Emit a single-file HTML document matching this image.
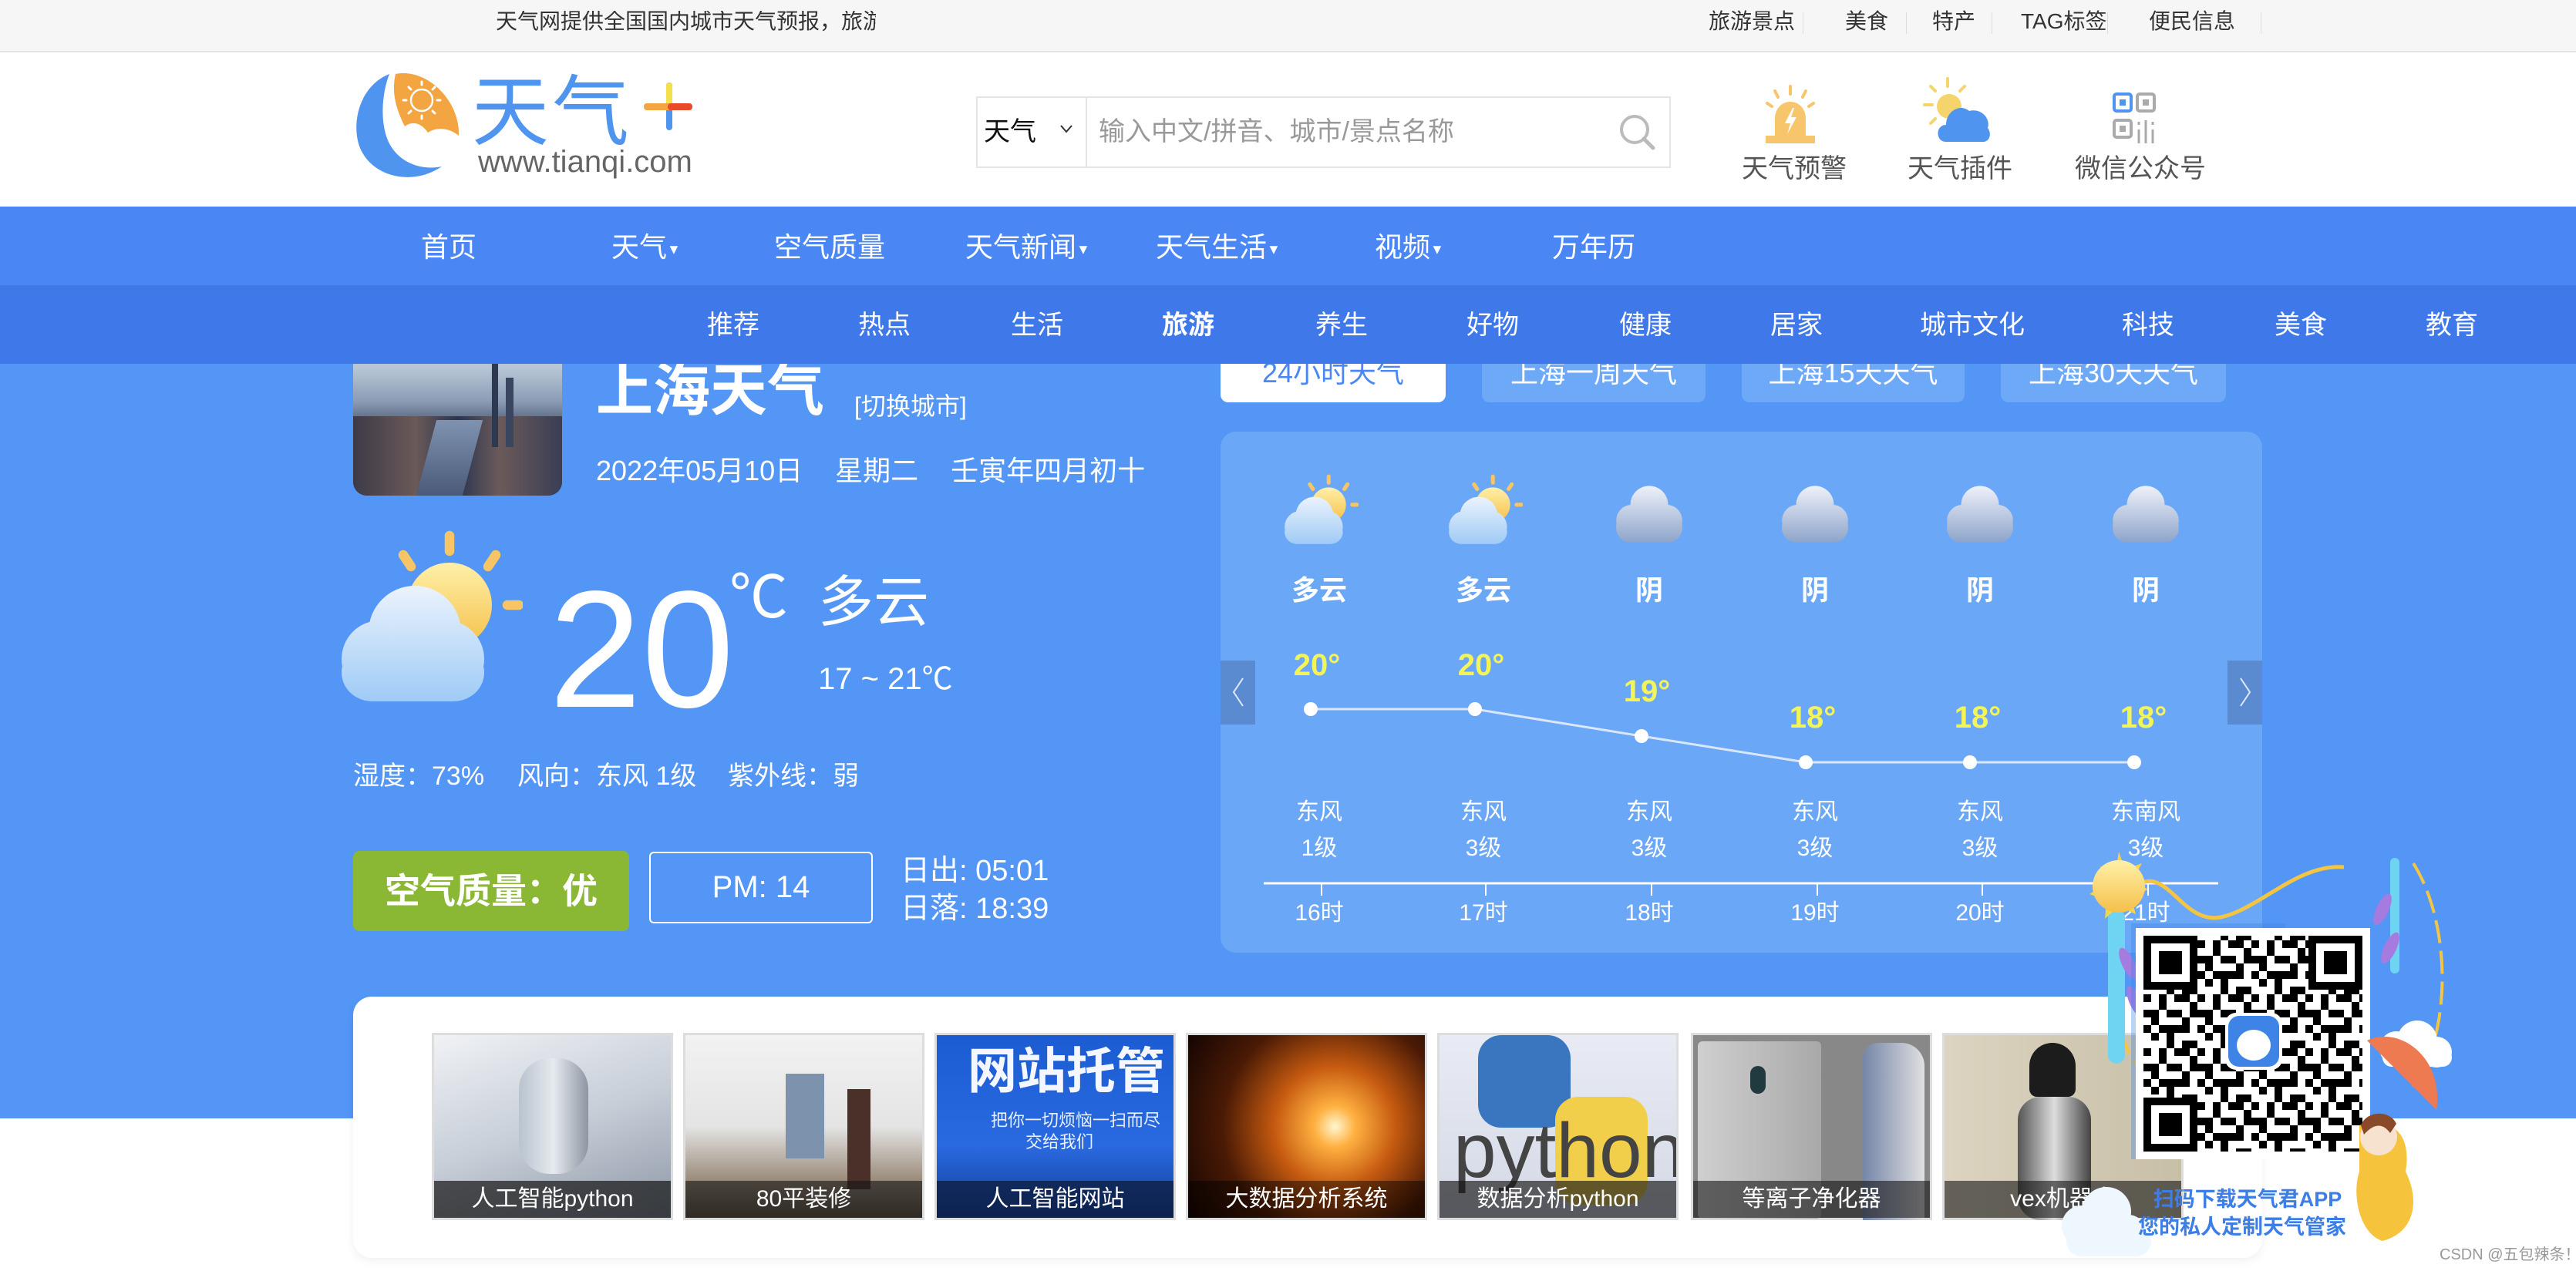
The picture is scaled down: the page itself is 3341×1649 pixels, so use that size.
<!DOCTYPE html>
<html><head><meta charset="utf-8">
<style>
*{margin:0;padding:0;box-sizing:border-box}
html,body{width:3341px;height:1649px;overflow:hidden;background:#fff}
body{font-family:"Liberation Sans","Noto Sans CJK SC",sans-serif;position:relative}
.a{position:absolute;white-space:nowrap;line-height:1}
.cn{font-family:"Liberation Sans","Noto Sans CJK SC",sans-serif}
</style></head><body>

<div class="a" style="left:0;top:400px;width:3341px;height:1051px;background:#5396f6"></div>

<div class="a" style="left:458px;top:420px;width:271px;height:223px;border-radius:18px;overflow:hidden;background:linear-gradient(180deg,#6f8fb8 0%,#b9c8d8 25%,#8b9db4 45%,#35435e 65%,#1f2a40 100%)">
 <div class="a" style="left:0;top:120px;width:271px;height:103px;background:linear-gradient(90deg,#3d3a48,#6a5a58 30%,#2a3550 50%,#6b5a5a 70%,#3a3e55)"></div>
 <div class="a" style="left:95px;top:125px;width:60px;height:98px;background:linear-gradient(180deg,#7f93b0,#4a5a78);transform:skewX(-15deg)"></div>
 <div class="a" style="left:180px;top:50px;width:8px;height:110px;background:#2e3850"></div>
 <div class="a" style="left:198px;top:70px;width:10px;height:90px;background:#3a4560"></div>
</div>

<div class="a" style="left:0;top:0;width:3341px;height:68px;background:#f6f6f6;border-bottom:2px solid #e3e3e3"></div>
<div class="a" style="left:643px;top:14px;font-size:28px;color:#333;width:493px;overflow:hidden">天气网提供全国国内城市天气预报，旅游景点</div>
<div class="a" style="left:2216px;top:14px;font-size:28px;color:#333">旅游景点</div>
<div class="a" style="left:2393px;top:14px;font-size:28px;color:#333">美食</div>
<div class="a" style="left:2506px;top:14px;font-size:28px;color:#333">特产</div>
<div class="a" style="left:2621px;top:14px;font-size:28px;color:#333">TAG标签</div>
<div class="a" style="left:2787px;top:14px;font-size:28px;color:#333">便民信息</div>
<div class="a" style="left:2338px;top:16px;width:1px;height:28px;background:#ddd"></div>
<div class="a" style="left:2472px;top:16px;width:1px;height:28px;background:#ddd"></div>
<div class="a" style="left:2583px;top:16px;width:1px;height:28px;background:#ddd"></div>
<div class="a" style="left:2733px;top:16px;width:1px;height:28px;background:#ddd"></div>
<div class="a" style="left:2932px;top:16px;width:1px;height:28px;background:#ddd"></div>

<div class="a" style="left:0;top:70px;width:3341px;height:198px;background:#fff"></div>
<svg class="a" style="left:455px;top:92px" width="150" height="146" viewBox="0 0 150 146">
 <path d="M50 4 C10 20 0 70 12 100 C28 138 80 150 118 124 C90 130 60 118 48 90 C38 66 40 30 50 4Z" fill="#4f94ef"/>
 <path d="M58 4 C100 -4 142 40 140 84 C128 74 112 72 100 80 C92 68 80 64 70 72 C60 52 52 30 58 4Z" fill="#f2a541"/>
 <circle cx="92" cy="38" r="14" fill="none" stroke="#fff" stroke-width="2.5"/>
 <g stroke="#fff" stroke-width="3" stroke-linecap="round">
  <line x1="92" y1="14" x2="92" y2="18"/><line x1="92" y1="58" x2="92" y2="62"/>
  <line x1="68" y1="38" x2="72" y2="38"/><line x1="112" y1="38" x2="116" y2="38"/>
  <line x1="75" y1="21" x2="78" y2="24"/><line x1="106" y1="52" x2="109" y2="55"/>
  <line x1="109" y1="21" x2="106" y2="24"/><line x1="78" y1="52" x2="75" y2="55"/>
 </g>
</svg>
<div class="a" style="left:612px;top:96px;font-size:100px;color:#4f94ef;letter-spacing:4px">天气</div>
<div class="a" style="left:864px;top:107px;width:8px;height:62px;background:#4f94ef;border-radius:4px"></div>
<div class="a" style="left:864px;top:107px;width:8px;height:30px;background:#f4e04a;border-radius:4px"></div>
<div class="a" style="left:835px;top:134px;width:60px;height:9px;background:#f2a541;border-radius:4px"></div>
<div class="a" style="left:866px;top:134px;width:32px;height:9px;background:#e84a2a;border-radius:4px"></div>
<div class="a" style="left:620px;top:190px;font-size:40px;color:#666">www.tianqi.com</div>

<div class="a" style="left:1266px;top:125px;width:901px;height:93px;border:2px solid #e5e5e5;background:#fff"></div>
<div class="a" style="left:1408px;top:127px;width:2px;height:89px;background:#e5e5e5"></div>
<div class="a" style="left:1276px;top:154px;font-size:34px;color:#111">天气</div>
<svg class="a" style="left:1374px;top:160px" width="18" height="14"><path d="M2 3 L9 11 L16 3" fill="none" stroke="#333" stroke-width="2"/></svg>
<div class="a" style="left:1425px;top:154px;font-size:34px;color:#999">输入中文/拼音、城市/景点名称</div>
<svg class="a" style="left:2098px;top:146px" width="52" height="52"><circle cx="22" cy="22" r="17" fill="none" stroke="#bbb" stroke-width="4"/><line x1="34" y1="34" x2="46" y2="46" stroke="#bbb" stroke-width="5" stroke-linecap="round"/></svg>

<svg class="a" style="left:2288px;top:110px" width="68" height="78" viewBox="0 0 68 78">
 <g stroke="#f6c56c" stroke-width="4" stroke-linecap="round"><line x1="34" y1="2" x2="34" y2="12"/><line x1="14" y1="8" x2="18" y2="16"/><line x1="54" y1="8" x2="50" y2="16"/><line x1="4" y1="24" x2="10" y2="28"/><line x1="64" y1="24" x2="58" y2="28"/></g>
 <path d="M14 68 L14 44 C14 30 24 22 34 22 C44 22 54 30 54 44 L54 68Z" fill="#f6c56c"/>
 <rect x="2" y="66" width="64" height="10" fill="#f6c56c"/>
 <path d="M37 30 L27 50 L34 50 L30 64 L42 42 L35 42 L39 30Z" fill="#fff"/>
</svg>
<svg class="a" style="left:2494px;top:100px" width="90" height="86" viewBox="0 0 90 86">
 <g stroke="#f6d46c" stroke-width="4" stroke-linecap="round"><line x1="32" y1="2" x2="32" y2="12"/><line x1="10" y1="12" x2="16" y2="18"/><line x1="54" y1="12" x2="48" y2="18"/><line x1="2" y1="36" x2="12" y2="36"/><line x1="10" y1="60" x2="16" y2="54"/></g>
 <circle cx="34" cy="38" r="16" fill="#f6d46c"/>
 <path d="M30 84 C16 84 16 62 30 62 C30 44 48 34 60 44 C76 40 88 54 84 66 C90 74 86 84 78 84Z" fill="#4f94ef"/>
</svg>
<svg class="a" style="left:2740px;top:120px" width="60" height="68" viewBox="0 0 60 68">
 <rect x="2" y="2" width="22" height="22" rx="3" fill="none" stroke="#4f94ef" stroke-width="4"/><rect x="9" y="9" width="8" height="8" fill="#4f94ef"/>
 <rect x="32" y="2" width="22" height="22" rx="3" fill="none" stroke="#aaa" stroke-width="4"/><rect x="39" y="9" width="8" height="8" fill="#aaa"/>
 <rect x="2" y="36" width="22" height="22" rx="3" fill="none" stroke="#aaa" stroke-width="4"/><rect x="9" y="43" width="8" height="8" fill="#aaa"/>
 <g stroke="#aaa" stroke-width="3"><line x1="34" y1="38" x2="34" y2="42"/><line x1="34" y1="48" x2="34" y2="66"/><line x1="43" y1="36" x2="43" y2="66"/><line x1="52" y1="38" x2="52" y2="42"/><line x1="52" y1="48" x2="52" y2="66"/></g>
</svg>
<div class="a" style="left:2259px;top:202px;font-size:34px;color:#555">天气预警</div>
<div class="a" style="left:2474px;top:202px;font-size:34px;color:#555">天气插件</div>
<div class="a" style="left:2691px;top:202px;font-size:34px;color:#555">微信公众号</div>

<div class="a" style="left:1583px;top:430px;width:292px;height:92px;background:#fff;border-radius:10px"></div>
<div class="a" style="left:1922px;top:430px;width:290px;height:92px;background:#6ea9f8;border-radius:10px"></div>
<div class="a" style="left:2259px;top:430px;width:289px;height:92px;background:#6ea9f8;border-radius:10px"></div>
<div class="a" style="left:2595px;top:430px;width:292px;height:92px;background:#6ea9f8;border-radius:10px"></div>
<div class="a" style="left:1583px;top:466px;width:292px;text-align:center;font-size:36px;color:#4a87f5">24小时天气</div>
<div class="a" style="left:1922px;top:466px;width:290px;text-align:center;font-size:36px;color:#fff">上海一周天气</div>
<div class="a" style="left:2259px;top:466px;width:289px;text-align:center;font-size:36px;color:#fff">上海15天天气</div>
<div class="a" style="left:2595px;top:466px;width:292px;text-align:center;font-size:36px;color:#fff">上海30天天气</div>
<div class="a" style="left:773px;top:470px;font-size:74px;font-weight:bold;color:#fff">上海天气</div>

<div class="a" style="left:0;top:268px;width:3341px;height:102px;background:#4a87f5"></div>
<div class="a" style="left:0;top:370px;width:3341px;height:102px;background:#3f78e9"></div>
<div class="a" style="top:303px;left:0;width:3341px;height:40px;font-size:36px;color:#fff">
 <span class="a" style="left:546px">首页</span>
 <span class="a" style="left:793px">天气<small style="font-size:18px;vertical-align:middle">▼</small></span>
 <span class="a" style="left:1004px">空气质量</span>
 <span class="a" style="left:1252px">天气新闻<small style="font-size:18px;vertical-align:middle">▼</small></span>
 <span class="a" style="left:1499px">天气生活<small style="font-size:18px;vertical-align:middle">▼</small></span>
 <span class="a" style="left:1783px">视频<small style="font-size:18px;vertical-align:middle">▼</small></span>
 <span class="a" style="left:2013px">万年历</span>
</div>
<div class="a" style="top:405px;left:0;width:3341px;height:40px;font-size:34px;color:#fff">
 <span class="a" style="left:917px">推荐</span>
 <span class="a" style="left:1113px">热点</span>
 <span class="a" style="left:1311px">生活</span>
 <span class="a" style="left:1507px;font-weight:bold">旅游</span>
 <span class="a" style="left:1706px">养生</span>
 <span class="a" style="left:1902px">好物</span>
 <span class="a" style="left:2100px">健康</span>
 <span class="a" style="left:2296px">居家</span>
 <span class="a" style="left:2490px">城市文化</span>
 <span class="a" style="left:2752px">科技</span>
 <span class="a" style="left:2950px">美食</span>
 <span class="a" style="left:3146px">教育</span>
</div>

<div class="a" style="left:1108px;top:511px;font-size:32px;color:#fff">[切换城市]</div>
<div class="a" style="left:773px;top:593px;font-size:36px;color:#fff;word-spacing:4px">2022年05月10日 &nbsp; 星期二 &nbsp; 壬寅年四月初十</div>

<svg width="0" height="0" style="position:absolute">
 <defs>
  <linearGradient id="sunG" x1="0" y1="0" x2="0" y2="1"><stop offset="0" stop-color="#fff0a8"/><stop offset="1" stop-color="#f5c04a"/></linearGradient>
  <linearGradient id="cloudG" gradientUnits="userSpaceOnUse" x1="0" y1="30" x2="0" y2="92"><stop offset="0" stop-color="#eef4fd"/><stop offset="1" stop-color="#9fcbf6"/></linearGradient>
  <linearGradient id="ovG" gradientUnits="userSpaceOnUse" x1="0" y1="18" x2="0" y2="90"><stop offset="0" stop-color="#eef1fa"/><stop offset="1" stop-color="#8ea4ca"/></linearGradient>
  <symbol id="pc" viewBox="0 0 100 100">
   <g stroke="#f7c566" stroke-width="5" stroke-linecap="round"><line x1="62" y1="6" x2="62" y2="14"/><line x1="38" y1="16" x2="42" y2="22"/><line x1="86" y1="16" x2="82" y2="22"/><line x1="92" y1="42" x2="98" y2="42"/></g>
   <circle cx="62" cy="42" r="22" fill="url(#sunG)"/>
   <g fill="url(#cloudG)"><circle cx="44" cy="56" r="24"/><circle cx="26" cy="70" r="20"/><circle cx="60" cy="70" r="20"/><rect x="6" y="62" width="74" height="30" rx="16"/></g>
  </symbol>
  <symbol id="ov" viewBox="0 0 100 100">
   <g fill="url(#ovG)"><circle cx="50" cy="42" r="24"/><circle cx="28" cy="62" r="20"/><circle cx="72" cy="62" r="20"/><rect x="8" y="52" width="84" height="38" rx="18"/></g>
  </symbol>
  <pattern id="qrp" width="70" height="70" patternUnits="userSpaceOnUse">
   <rect width="70" height="70" fill="#fff"/>
   <g fill="#000"><rect x="0" y="0" width="10" height="20"/><rect x="20" y="0" width="20" height="10"/><rect x="50" y="0" width="10" height="10"/><rect x="10" y="20" width="20" height="10"/><rect x="40" y="10" width="10" height="20"/><rect x="60" y="20" width="10" height="20"/><rect x="0" y="40" width="20" height="10"/><rect x="30" y="30" width="10" height="20"/><rect x="50" y="40" width="10" height="10"/><rect x="10" y="50" width="10" height="20"/><rect x="30" y="60" width="20" height="10"/><rect x="60" y="50" width="10" height="10"/><rect x="20" y="40" width="10" height="10"/><rect x="50" y="20" width="10" height="10"/></g>
  </pattern>
 </defs>
</svg>

<svg class="a" style="left:428px;top:680px" width="250" height="250"><use href="#pc" width="250" height="250"/></svg>
<div class="a" style="left:712px;top:734px;font-size:216px;color:#fff">20</div>
<div class="a" style="left:946px;top:738px;font-size:76px;color:#fff">℃</div>
<div class="a" style="left:1061px;top:746px;font-size:72px;color:#fff">多云</div>
<div class="a" style="left:1061px;top:861px;font-size:40px;color:#fff">17 ~ 21℃</div>
<div class="a" style="left:458px;top:990px;font-size:34px;color:#fff">湿度：73%</div>
<div class="a" style="left:671px;top:990px;font-size:34px;color:#fff">风向：东风 1级</div>
<div class="a" style="left:944px;top:990px;font-size:34px;color:#fff">紫外线：弱</div>
<div class="a" style="left:458px;top:1104px;width:358px;height:104px;background:#8ab734;border-radius:8px;color:#fff;font-size:46px;font-weight:bold;text-align:center;line-height:104px">空气质量：优</div>
<div class="a" style="left:842px;top:1105px;width:290px;height:93px;border:2px solid #fff;border-radius:6px;color:#fff;font-size:40px;text-align:center;line-height:89px">PM: 14</div>
<div class="a" style="left:1168px;top:1111px;font-size:38px;color:#fff">日出: 05:01</div>
<div class="a" style="left:1168px;top:1160px;font-size:38px;color:#fff">日落: 18:39</div>

<div class="a" style="left:1583px;top:560px;width:1351px;height:676px;background:#6aa7f7;border-radius:20px"></div>
<div class="a" style="left:1583px;top:857px;width:45px;height:83px;background:#5a8bd0"></div>
<div class="a" style="left:2889px;top:857px;width:45px;height:83px;background:#5a8bd0"></div>
<svg class="a" style="left:0;top:0" width="3341" height="1649">
 <path d="M1612 880 L1600 898 L1612 916" fill="none" stroke="#dfe9fb" stroke-width="2"/>
 <path d="M2906 880 L2918 898 L2906 916" fill="none" stroke="#dfe9fb" stroke-width="2"/>
 <use href="#pc" x="1660" y="612" width="102" height="102"/>
 <use href="#pc" x="1873" y="612" width="102" height="102"/>
 <use href="#ov" x="2088" y="612" width="102" height="102"/>
 <use href="#ov" x="2303" y="612" width="102" height="102"/>
 <use href="#ov" x="2517" y="612" width="102" height="102"/>
 <use href="#ov" x="2732" y="612" width="102" height="102"/>
 <g font-family="Liberation Sans, Noto Sans CJK SC, sans-serif" fill="#fff" text-anchor="middle">
  <g font-size="36" font-weight="bold"><text x="1711" y="778">多云</text><text x="1924" y="778">多云</text><text x="2139" y="778">阴</text><text x="2354" y="778">阴</text><text x="2568" y="778">阴</text><text x="2783" y="778">阴</text></g>
  <g font-size="40" fill="#f3f35a" font-weight="bold"><text x="1708" y="876">20°</text><text x="1921" y="876">20°</text><text x="2136" y="910">19°</text><text x="2351" y="944">18°</text><text x="2565" y="944">18°</text><text x="2780" y="944">18°</text></g>
  <polyline points="1700,920 1913,920 2129,955 2342,989 2555,989 2768,989" fill="none" stroke="#d9e6fb" stroke-width="3"/>
  <g fill="#fff"><circle cx="1700" cy="920" r="9"/><circle cx="1913" cy="920" r="9"/><circle cx="2129" cy="955" r="9"/><circle cx="2342" cy="989" r="9"/><circle cx="2555" cy="989" r="9"/><circle cx="2768" cy="989" r="9"/></g>
  <g font-size="30"><text x="1711" y="1063">东风</text><text x="1924" y="1063">东风</text><text x="2139" y="1063">东风</text><text x="2354" y="1063">东风</text><text x="2568" y="1063">东风</text><text x="2783" y="1063">东南风</text>
  <text x="1711" y="1110">1级</text><text x="1924" y="1110">3级</text><text x="2139" y="1110">3级</text><text x="2354" y="1110">3级</text><text x="2568" y="1110">3级</text><text x="2783" y="1110">3级</text>
  <text x="1711" y="1194">16时</text><text x="1924" y="1194">17时</text><text x="2139" y="1194">18时</text><text x="2354" y="1194">19时</text><text x="2568" y="1194">20时</text><text x="2783" y="1194">21时</text></g>
  <line x1="1639" y1="1146" x2="2877" y2="1146" stroke="#fff" stroke-width="3"/>
  <g stroke="#fff" stroke-width="2"><line x1="1714" y1="1146" x2="1714" y2="1162"/><line x1="1927" y1="1146" x2="1927" y2="1162"/><line x1="2142" y1="1146" x2="2142" y2="1162"/><line x1="2357" y1="1146" x2="2357" y2="1162"/><line x1="2571" y1="1146" x2="2571" y2="1162"/><line x1="2786" y1="1146" x2="2786" y2="1162"/></g>
 </g>
</svg>

<div class="a" style="left:458px;top:1293px;width:2476px;height:339px;background:#fff;border-radius:24px;box-shadow:0 4px 12px rgba(0,0,0,0.06)"></div>
<div class="a" style="left:560px;top:1340px;width:313px;height:243px;border:3px solid #ddd;background:linear-gradient(160deg,#f0f2f5,#c7ced8 50%,#8d97a5)">
 <div class="a" style="left:110px;top:30px;width:90px;height:150px;border-radius:40px;background:linear-gradient(90deg,#b9c3cf,#e6eaef,#8d96a3)"></div></div>
<div class="a" style="left:886px;top:1340px;width:313px;height:243px;border:3px solid #ddd;background:linear-gradient(180deg,#f2f2f2 0%,#e4e4e4 50%,#9a8a78 80%,#5a4c40 100%)">
 <div class="a" style="left:130px;top:50px;width:50px;height:110px;background:#7d93ad"></div><div class="a" style="left:210px;top:70px;width:30px;height:130px;background:#4a3028"></div></div>
<div class="a" style="left:1212px;top:1340px;width:313px;height:243px;border:3px solid #ddd;background:linear-gradient(180deg,#1c5cd2,#2a6ae0 60%,#113e9c)">
 <div class="a" style="left:40px;top:15px;font-size:64px;font-weight:bold;color:#f4f7ff">网站托管</div>
 <div class="a" style="left:70px;top:100px;font-size:22px;color:#e8efff">把你一切烦恼一扫而尽</div>
 <div class="a" style="left:115px;top:128px;font-size:22px;color:#e8efff">交给我们</div></div>
<div class="a" style="left:1538px;top:1340px;width:313px;height:243px;border:3px solid #ddd;background:radial-gradient(circle at 62% 50%,#fff6d0 0%,#ffb040 12%,#c55a10 35%,#4a1a05 65%,#140502 100%)"></div>
<div class="a" style="left:1864px;top:1340px;width:313px;height:243px;border:3px solid #ddd;background:linear-gradient(180deg,#e8ebf4,#d4d9e6);overflow:hidden">
 <div class="a" style="left:50px;top:0;width:120px;height:120px;border-radius:30px;background:#3a76c0"></div>
 <div class="a" style="left:150px;top:80px;width:120px;height:140px;border-radius:30px;background:#f2cf4a"></div>
 <div class="a" style="left:18px;top:100px;font-size:100px;color:#444">python</div></div>
<div class="a" style="left:2193px;top:1340px;width:313px;height:243px;border:3px solid #ddd;background:#888">
 <div class="a" style="left:6px;top:8px;width:160px;height:230px;background:linear-gradient(90deg,#cfcfcf,#a9a9a9);border-radius:6px"></div>
 <div class="a" style="left:220px;top:10px;width:80px;height:230px;background:linear-gradient(90deg,#7586a8,#e0e0e0);border-radius:20px 30px 0 0"></div>
 <div class="a" style="left:74px;top:40px;width:20px;height:36px;border-radius:10px;background:#203a40"></div></div>
<div class="a" style="left:2519px;top:1340px;width:313px;height:243px;border:3px solid #ddd;background:linear-gradient(90deg,#dcd4c0,#c8bfa8)">
 <div class="a" style="left:110px;top:10px;width:60px;height:70px;border-radius:30px 30px 10px 10px;background:#1c1c1c"></div>
 <div class="a" style="left:95px;top:80px;width:95px;height:160px;border-radius:30px;background:linear-gradient(90deg,#555,#ddd,#444)"></div></div>
<div class="a cn" style="left:563px;top:1532px;width:307px;height:48px;background:rgba(20,20,20,0.7);color:#fff;font-size:30px;text-align:center;line-height:48px">人工智能python</div>
<div class="a cn" style="left:889px;top:1532px;width:307px;height:48px;background:rgba(20,20,20,0.6);color:#fff;font-size:30px;text-align:center;line-height:48px">80平装修</div>
<div class="a cn" style="left:1215px;top:1532px;width:307px;height:48px;background:rgba(10,20,40,0.65);color:#fff;font-size:30px;text-align:center;line-height:48px">人工智能网站</div>
<div class="a cn" style="left:1541px;top:1532px;width:307px;height:48px;background:rgba(0,0,0,0.45);color:#fff;font-size:30px;text-align:center;line-height:48px">大数据分析系统</div>
<div class="a cn" style="left:1867px;top:1532px;width:307px;height:48px;background:rgba(20,20,20,0.65);color:#fff;font-size:30px;text-align:center;line-height:48px">数据分析python</div>
<div class="a cn" style="left:2196px;top:1532px;width:307px;height:48px;background:rgba(20,20,20,0.6);color:#fff;font-size:30px;text-align:center;line-height:48px">等离子净化器</div>
<div class="a cn" style="left:2522px;top:1532px;width:307px;height:48px;background:rgba(20,20,20,0.6);color:#fff;font-size:30px;text-align:center;line-height:48px">vex机器人</div>

<svg class="a" style="left:2660px;top:1080px" width="560" height="569" viewBox="0 0 560 569">
 <path d="M100 80 C60 140 80 260 110 300" fill="none" stroke="#f4c542" stroke-width="4" stroke-dasharray="18 10"/>
 <path d="M470 40 C520 120 520 260 470 330" fill="none" stroke="#f4c542" stroke-width="4" stroke-dasharray="30 10"/>
 <path d="M110 70 C150 40 170 120 220 110 C270 100 320 40 380 45" fill="none" stroke="#f4c542" stroke-width="5"/>
 <rect x="74" y="100" width="22" height="200" rx="11" fill="#6fd3f2"/>
 <rect x="440" y="33" width="12" height="150" rx="6" fill="#6fd3f2"/>
 <g fill="#a57be0"><ellipse cx="430" cy="100" rx="8" ry="22" transform="rotate(25 430 100)"/><ellipse cx="440" cy="150" rx="8" ry="22" transform="rotate(25 440 150)"/><ellipse cx="100" cy="170" rx="8" ry="22" transform="rotate(-25 100 170)"/><ellipse cx="110" cy="220" rx="8" ry="22" transform="rotate(-25 110 220)"/></g>
 <g fill="#f6d44a"><polygon points="88,25 96,48 118,40 106,62 126,74 104,84 110,106 88,96 70,112 72,88 50,80 72,66 64,44 84,50"/></g>
 <circle cx="88" cy="70" r="34" fill="url(#sunG)"/>
 <rect x="104" y="118" width="200" height="306" fill="#3d84e6" opacity="0.35"/>
 <rect x="110" y="124" width="304" height="300" fill="#fff"/>
 <rect x="120" y="134" width="284" height="280" fill="url(#qrp)"/>
 <g><rect x="120" y="134" width="70" height="70" fill="#000"/><rect x="130" y="144" width="50" height="50" fill="#fff"/><rect x="140" y="154" width="30" height="30" fill="#000"/>
 <rect x="334" y="134" width="70" height="70" fill="#000"/><rect x="344" y="144" width="50" height="50" fill="#fff"/><rect x="354" y="154" width="30" height="30" fill="#000"/>
 <rect x="120" y="344" width="70" height="70" fill="#000"/><rect x="130" y="354" width="50" height="50" fill="#fff"/><rect x="140" y="364" width="30" height="30" fill="#000"/></g>
 <rect x="226" y="234" width="74" height="74" rx="14" fill="#fff"/>
 <rect x="230" y="238" width="66" height="66" rx="14" fill="#3d84e6"/>
 <ellipse cx="263" cy="276" rx="22" ry="20" fill="#fff"/>
 <g fill="#fff"><circle cx="448" cy="280" r="22"/><circle cx="475" cy="270" r="26"/><circle cx="500" cy="285" r="20"/><rect x="430" y="280" width="90" height="24" rx="12"/></g>
 <g fill="#eef7fd"><circle cx="40" cy="510" r="26"/><circle cx="72" cy="492" r="32"/><circle cx="100" cy="520" r="24"/><rect x="20" y="510" width="110" height="40" rx="20"/></g>
 <path d="M410 270 C450 250 510 290 500 360 Z" fill="#ee7a52"/>
 <path d="M400 380 C430 370 470 380 460 440 C480 480 470 520 430 530 C400 520 390 470 400 440Z" fill="#f6c43c"/>
 <circle cx="425" cy="395" r="24" fill="#f7e1cf"/>
 <path d="M402 380 C410 360 440 360 448 378 L440 390 C430 376 418 378 406 392Z" fill="#8a4a2a"/>
 <g font-family="Liberation Sans, Noto Sans CJK SC, sans-serif" font-weight="bold" fill="#3d7ee6" text-anchor="middle" font-size="27">
  <text x="255" y="485">扫码下载天气君APP</text><text x="248" y="521">您的私人定制天气管家</text></g>
</svg>
<div class="a" style="left:3164px;top:1618px;font-size:20px;color:#999">CSDN @五包辣条！</div>
</body></html>
